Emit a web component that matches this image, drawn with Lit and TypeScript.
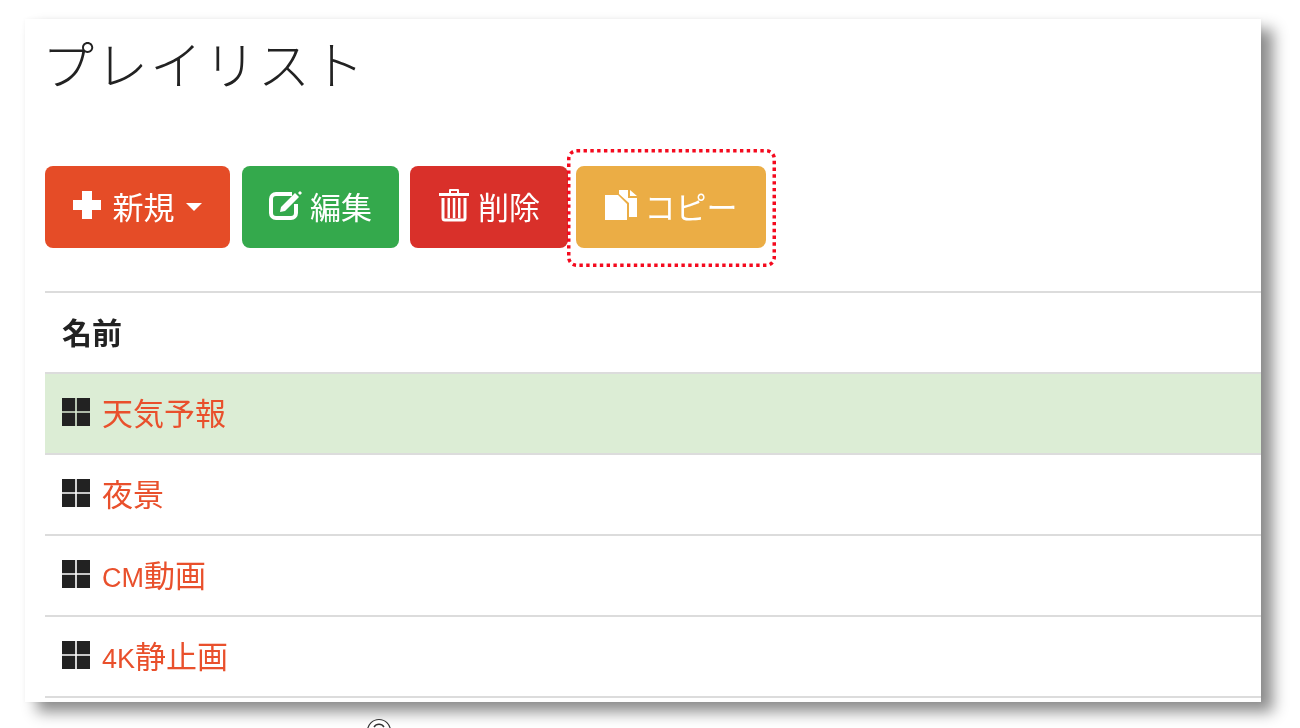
import { LitElement, css, html } from "lit";
import { customElement } from "lit/decorators.js";

const plusIcon = html`<svg class="icon plus" width="30" height="30" viewBox="0 0 30 30"><path fill="#fff" d="M10 1h10v9h9v10h-9v9H10v-9H1V10h9z" /></svg>`;
const editIcon = html`<svg class="icon" width="33" height="29" viewBox="0 0 33 29">
  <path fill="none" stroke="#fff" stroke-width="4" d="M23 3H7a5 5 0 0 0-5 5v14a5 5 0 0 0 5 5h15a5 5 0 0 0 5-5v-9" />
  <path fill="#fff" d="M11 21l1-5L26 2l4 4-14 14zM29 2l2-2 2 2-2 2z" />
</svg>`;
const trashIcon = html`<svg class="icon" width="32" height="34" viewBox="0 0 32 34">
  <path fill="#fff" d="M1 5h30v3H1zM11 5V2a1 1 0 0 1 1-1h8a1 1 0 0 1 1 1v3h-2V3h-6v2z" />
  <path fill="none" stroke="#fff" stroke-width="3" d="M5 10v20a2 2 0 0 0 2 2h18a2 2 0 0 0 2-2V10" />
  <path fill="#fff" d="M9.500 10h2.500v20H9.500zM14.800 10h2.500v20h-2.500zM20 10h2.500v20H20z" />
</svg>`;
const copyIcon = html`<svg class="icon" width="32" height="30" viewBox="0 0 32 30">
  <path fill="#fff" d="M0 5h13l9 9v16H0z" />
  <path fill="#fff" d="M14 0h9v8h9v19h-8V13l-10-9zM25 0l7 6h-7z" />
</svg>`;
const gridIcon = html`<svg class="grid" width="30" height="30" viewBox="0 0 30 30">
  <path fill="#222" d="M1 1h13.200v13.200H1zM15.800 1H29v13.200H15.800zM1 15.800h13.200V29H1zM15.800 15.800H29V29H15.800z" />
</svg>`;

const playlists = [
  { latin: "", name: "天気予報", selected: true },
  { latin: "", name: "夜景", selected: false },
  { latin: "CM", name: "動画", selected: false },
  { latin: "4K", name: "静止画", selected: false },
];

@customElement("app-root")
export class AppRoot extends LitElement {
  static styles = css`
    :host {
      display: block;
      width: 1300px;
      height: 728px;
      overflow: hidden;
      position: relative;
      background: #fff;
      font-family: "Liberation Sans", "Noto Sans CJK JP", sans-serif;
      color: #222;
    }

    .panel {
      margin: 19px 0 0 25px;
      width: 1236px;
      height: 683px;
      padding-left: 20px;
      box-sizing: border-box;
      background: #fff;
      box-shadow: 12px 10px 14px rgba(0, 0, 0, 0.45), 0 0 4px rgba(0, 0, 0, 0.04);
      display: flex;
      flex-direction: column;
    }

    h1 {
      margin: 18px 0 0 -3px;
      height: 59px;
      font-size: 52px;
      line-height: 60px;
      font-weight: 300;
      letter-spacing: 2px;
      color: #222;
      filter: blur(0.35px);
    }

    .toolbar {
      display: flex;
      margin-top: 70px;
      height: 82px;
    }

    .btn {
      position: relative;
      display: flex;
      align-items: center;
      justify-content: center;
      gap: 8px;
      height: 82px;
      padding-bottom: 4px;
      border-radius: 8px;
      color: #fff;
      font-size: 31px;
      box-sizing: border-box;
    }

    .btn > * {
      filter: blur(0.35px);
    }

    .add {
      width: 185px;
      padding-right: 2px;
      background: #e54c27;
    }

    .plus {
      margin-right: 3px;
    }

    .edit {
      width: 157px;
      margin-left: 12px;
      background: #34a94c;
    }

    .delete {
      width: 158px;
      margin-left: 11px;
      background: #d9302a;
    }

    .copy {
      width: 190px;
      margin-left: 8px;
      background: #ebad45;
    }

    .btn .focus-ring {
      position: absolute;
      left: -9px;
      top: -17px;
      filter: none;
    }

    .caret {
      width: 0;
      height: 0;
      margin: 4px 0 0 3px;
      border-left: 8px solid transparent;
      border-right: 8px solid transparent;
      border-top: 8px solid #fff;
    }

    .icon {
      display: block;
      flex: none;
    }

    .list {
      margin-top: 43px;
      border-top: 2px solid #dcdcdc;
    }

    .row {
      display: flex;
      align-items: center;
      gap: 11px;
      height: 81px;
      box-sizing: border-box;
      padding: 0 0 4px 16px;
      border-bottom: 2px solid #dcdcdc;
      font-size: 31px;
    }

    .row > * {
      filter: blur(0.35px);
    }

    .head {
      padding-left: 17px;
      font-size: 30px;
      font-weight: 700;
      color: #222;
    }

    .selected {
      background: #dcedd5;
    }

    .grid {
      display: block;
      flex: none;
    }

    a {
      color: #e9502c;
      text-decoration: none;
    }

    .latin {
      font-size: 27px;
    }

    .mark {
      position: absolute;
      left: 366px;
      top: 718px;
    }
  `;

  render() {
    return html`
      <div class="panel">
        <h1>プレイリスト</h1>
        <div class="toolbar">
          <div class="btn add">${plusIcon}<span>新規</span><span class="caret"></span></div>
          <div class="btn edit">${editIcon}<span>編集</span></div>
          <div class="btn delete">${trashIcon}<span>削除</span></div>
          <div class="btn copy">
            ${copyIcon}<span>コピー</span>
            <svg class="focus-ring" width="209" height="118" viewBox="0 0 209 118">
              <rect
                x="1.750"
                y="1.750"
                width="205.500"
                height="114.500"
                rx="8"
                fill="none"
                stroke="#f40a1e"
                stroke-width="3.500"
                stroke-dasharray="3.400 3.400"
              />
            </svg>
          </div>
        </div>
        <div class="list">
          <div class="row head"><span>名前</span></div>
          ${playlists.map(
            (p) => html`
              <div class="row ${p.selected ? "selected" : ""}">
                ${gridIcon}<a href="#"><span class="latin">${p.latin}</span>${p.name}</a>
              </div>
            `
          )}
        </div>
      </div>
      <svg class="mark" width="28" height="14" viewBox="0 0 28 14">
        <circle cx="13" cy="13" r="11.500" fill="#fff" stroke="#333" stroke-width="1.200" />
        <path fill="none" stroke="#333" stroke-width="1.400" d="M8 9a6 6 0 0 1 10 0" />
      </svg>
    `;
  }
}
